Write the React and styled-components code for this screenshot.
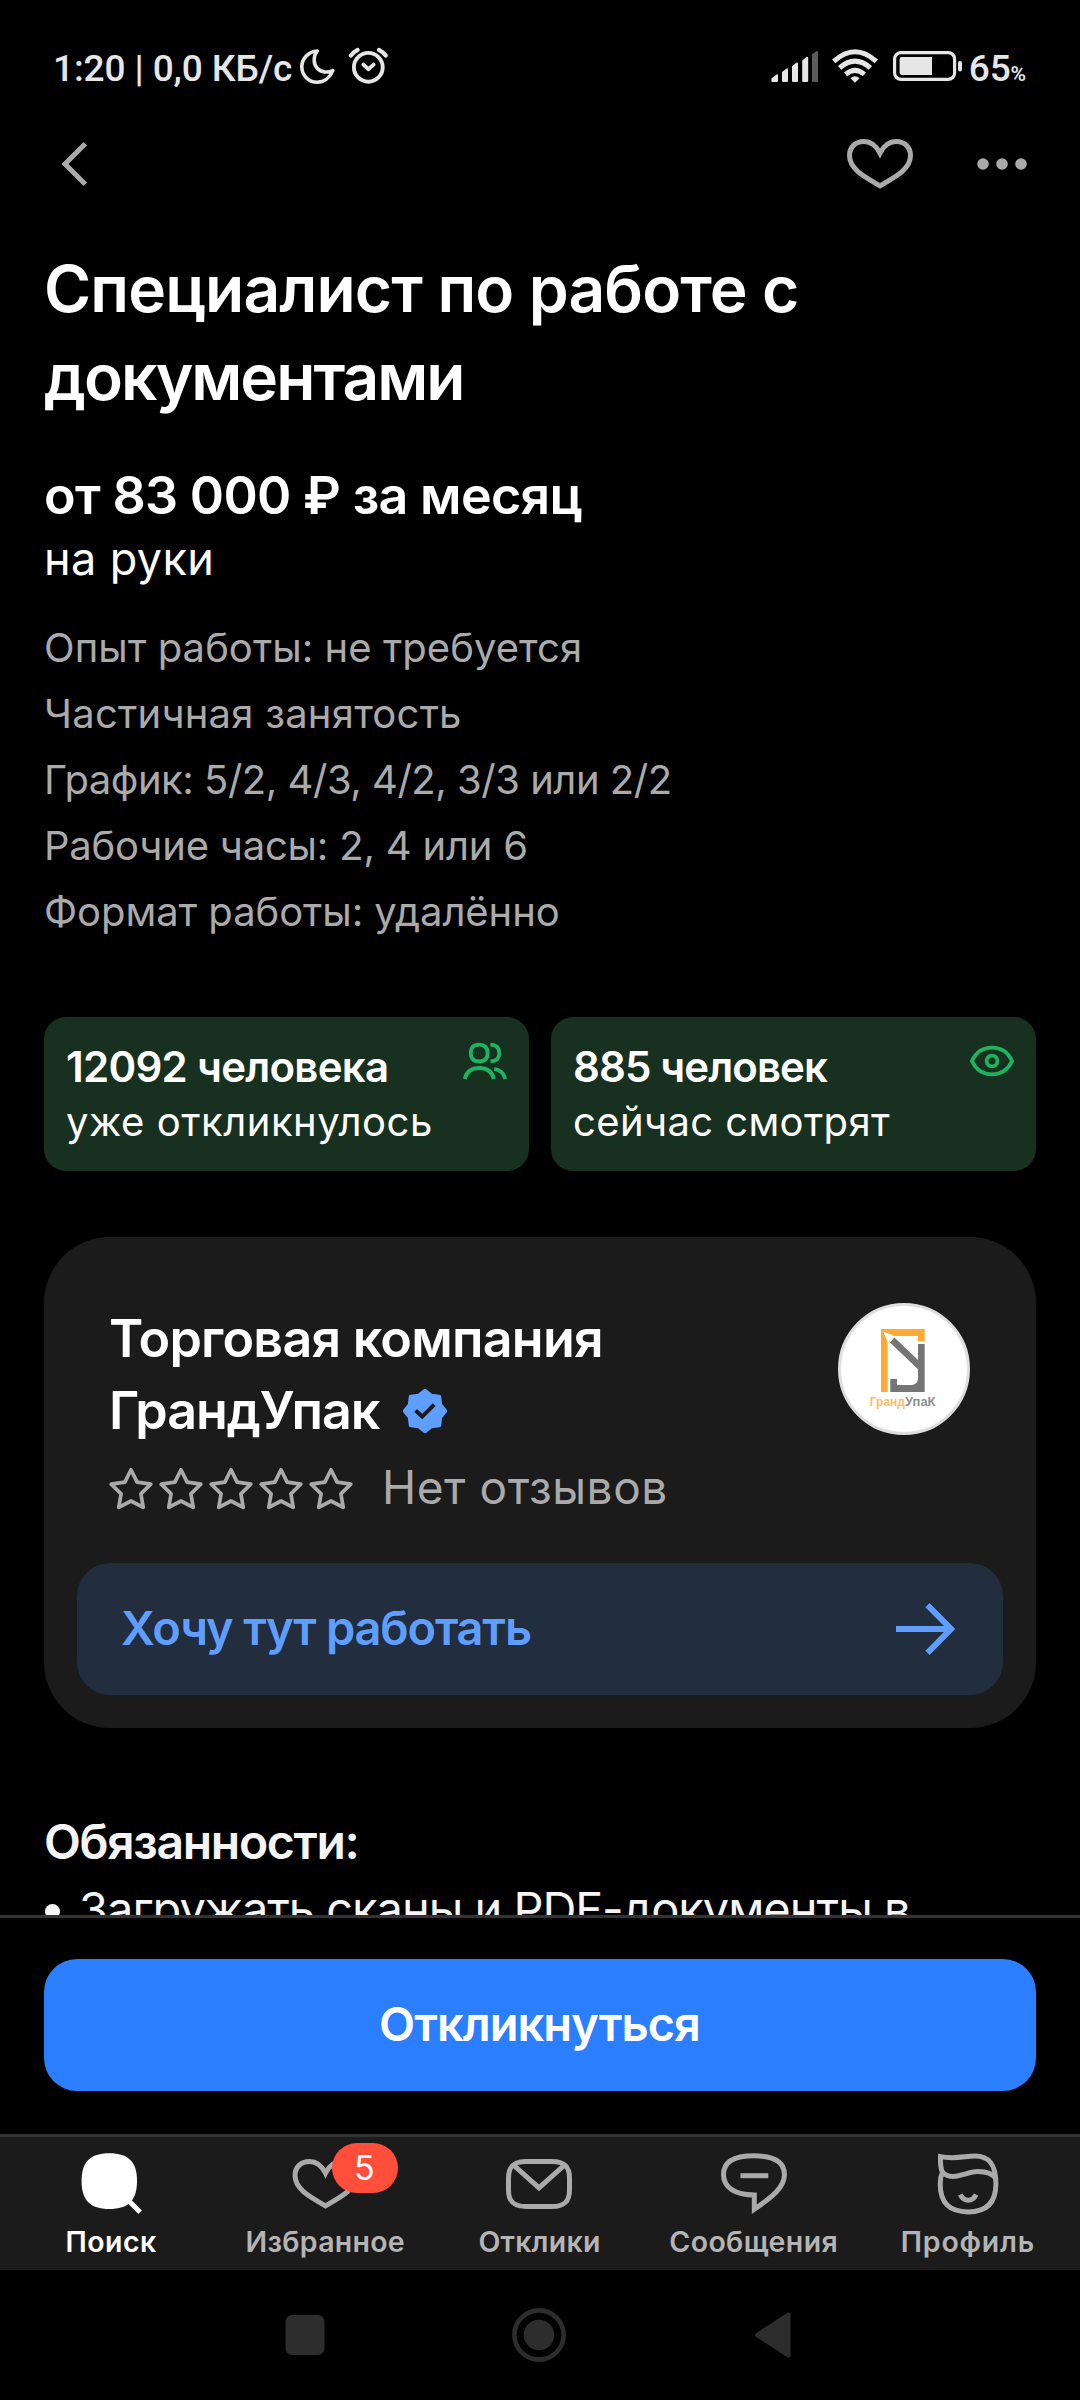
import React from 'react';
import styled, { createGlobalStyle } from 'styled-components';

const color = {
  bg: '#000000',
  surface: '#1b1b1b',
  line: '#333333',
  text: '#ffffff',
  muted: '#aaaaaa',
  status: '#e6e6e6',
  green: '#1db360',
  greenBg: '#18301f',
  blue: '#2b7fff',
  blueText: '#5e9eff',
  blueBg: '#222d3d',
  red: '#ff4f3a',
  system: '#2d2d2d',
};

const GlobalStyle = createGlobalStyle`
  * { box-sizing: border-box; }
  body {
    margin: 0;
    background: ${color.bg};
    color: ${color.text};
    font-family: Inter, "Noto Sans", sans-serif;
  }
  svg { display: block; flex: none; }
`;

const Screen = styled.div`
  display: flex;
  flex-direction: column;
  width: 1080px;
  height: 2400px;
  overflow: hidden;
  background: ${color.bg};
`;

/* Status bar */

const StatusBar = styled.div`
  display: flex;
  align-items: center;
  justify-content: space-between;
  flex: none;
  height: 100px;
  padding: 32px 54px 0 53px;
  color: ${color.status};
`;

const StatusGroup = styled.div`
  display: flex;
  align-items: center;
  gap: ${(p) => p.$gap}px;
`;

const StatusText = styled.span`
  margin: 5px ${(p) => p.$right || 0}px 0 ${(p) => p.$left || 0}px;
  font: 500 37px/44px Roboto, sans-serif;
  letter-spacing: -0.11px;
  white-space: pre;
`;

const Percent = styled.small`
  font-size: 21px;
  font-weight: 600;
  line-height: 0;
`;

/* Top bar */

const TopBar = styled.header`
  display: flex;
  align-items: center;
  justify-content: space-between;
  flex: none;
  height: 128px;
  padding: 0 53px 0 60px;
  color: ${color.muted};
`;

const TopActions = styled.div`
  display: flex;
  align-items: center;
  gap: 64px;
`;

/* Vacancy */

const Content = styled.main`
  display: flex;
  flex-direction: column;
  flex: 1;
  min-height: 0;
  overflow: hidden;
  padding: 17px 44px 0;
`;

const Line = styled.span`
  display: flex;
  align-items: center;
  white-space: pre;
  letter-spacing: ${(p) => p.$track || 0}px;
`;

const Title = styled.h1`
  flex: none;
  margin: 0;
  font-size: 64px;
  font-weight: 600;
  line-height: 88px;
`;

const Salary = styled.div`
  flex: none;
  margin-top: 43px;
  font-size: 52px;
  font-weight: 600;
  line-height: 64px;
`;

const Net = styled.div`
  flex: none;
  margin-top: 1px;
  font-size: 45px;
  line-height: 60px;
`;

const Details = styled.div`
  flex: none;
  margin-top: 26px;
  color: ${color.muted};
  font-size: 40px;
  line-height: 66px;
`;

const Stats = styled.div`
  display: grid;
  grid-template-columns: 1fr 1fr;
  gap: 22px;
  flex: none;
  margin-top: 72px;
`;

const StatCard = styled.div`
  display: flex;
  justify-content: space-between;
  height: 154px;
  padding: 22px 22px 20px;
  border-radius: 22px;
  background: ${color.greenBg};
`;

const StatValue = styled.div`
  font-size: 42px;
  font-weight: 600;
  line-height: 55px;
`;

const StatLabel = styled.div`
  width: 0;
  font-size: 40px;
  line-height: 55px;
`;

/* Company */

const CompanyCard = styled.section`
  display: flex;
  flex-direction: column;
  flex: none;
  height: 491px;
  margin-top: 66px;
  padding: 66px 33px 33px;
  border-radius: 66px;
  background: ${color.surface};
`;

const CompanyHead = styled.div`
  display: flex;
  align-items: flex-start;
  justify-content: space-between;
  padding: 0 33px 0 32px;
`;

const CompanyName = styled.h2`
  margin: 0;
  font-size: 52px;
  font-weight: 600;
  line-height: 72px;
`;

const Verified = styled.svg`
  margin-left: 24px;
`;

const Rating = styled.div`
  display: flex;
  align-items: center;
  height: 66px;
  margin-top: 9px;
  color: ${color.muted};
`;

const Stars = styled.div`
  display: flex;
  gap: 6px;
`;

const RatingText = styled.span`
  margin: -4px 0 0 29px;
  font-size: 46px;
  line-height: 60px;
  letter-spacing: 0.55px;
`;

const WishButton = styled.button`
  display: flex;
  align-items: center;
  justify-content: space-between;
  height: 132px;
  margin-top: auto;
  padding: 0 48px 0 44px;
  border: 0;
  border-radius: 33px;
  background: ${color.blueBg};
  color: ${color.blueText};
  font: 600 47px/60px Inter, sans-serif;
  letter-spacing: -1.2px;
`;

const WishLabel = styled.span`
  padding-bottom: 2px;
`;

/* Description */

const SectionTitle = styled.h3`
  flex: none;
  margin: 81px 0 1px;
  color: #f5f5f5;
  font-size: 48px;
  font-weight: 600;
  line-height: 66px;
  letter-spacing: -1.31px;
`;

const List = styled.ul`
  flex: none;
  margin: 0;
  padding: 0;
  list-style: none;
`;

const ListItem = styled.li`
  display: flex;
  align-items: center;
  color: #f5f5f5;
  font-size: 47px;
  line-height: 66px;
  letter-spacing: -1.02px;
  white-space: nowrap;

  &::before {
    content: '';
    width: 15px;
    height: 15px;
    margin: 4px 19px 0 1px;
    border-radius: 50%;
    background: currentColor;
  }
`;

/* Bottom */

const ActionBar = styled.div`
  flex: none;
  height: 219px;
  padding: 41px 44px 0;
  border-top: 3px solid ${color.line};
`;

const ApplyButton = styled.button`
  width: 100%;
  height: 132px;
  padding: 0 1px 2px 0;
  border: 0;
  border-radius: 33px;
  background: ${color.blue};
  color: ${color.text};
  font: 600 47px/60px Inter, sans-serif;
  letter-spacing: -0.96px;
`;

const TabBar = styled.nav`
  display: grid;
  grid-template-columns: repeat(5, 1fr);
  flex: none;
  height: 136px;
  padding: 14px 5px 0 4px;
  border-top: 3px solid ${color.line};
  background: ${color.surface};
`;

const Tab = styled.div`
  display: flex;
  flex-direction: column;
  align-items: center;
  gap: 7px;
  color: ${(p) => (p.$active ? color.text : color.muted)};
`;

const TabIcon = styled.div`
  position: relative;
  width: 66px;
  height: 66px;
`;

const TabLabel = styled.span`
  color: ${(p) => (p.$active ? color.text : '#b4b4b4')};
  font-size: 28.5px;
  font-weight: 600;
  line-height: 36px;
  letter-spacing: ${(p) => p.$track}px;
`;

const Badge = styled.span`
  position: absolute;
  top: -8px;
  left: 40px;
  width: 66px;
  height: 50px;
  padding-right: 2px;
  border-radius: 25px;
  background: ${color.red};
  color: ${color.text};
  font-size: 34px;
  line-height: 50px;
  text-align: center;
`;

const SystemBar = styled.div`
  display: flex;
  align-items: center;
  flex: none;
  height: 130px;
  padding-left: 285px;
  gap: 187px;
  color: ${color.system};
`;

/* Icons */

const Outline = ({ w = 66, h = 66, sw = 5, children, ...rest }) => (
  <svg width={w} height={h} viewBox={`0 0 ${w} ${h}`} fill="none" stroke="currentColor" strokeWidth={sw} {...rest}>
    {children}
  </svg>
);

const MoonIcon = () => (
  <Outline w={36} h={36} sw={3.6} strokeLinejoin="round">
    <path d="M18.2 3C9 3.5 2.8 11 2.8 18.8C2.8 27.5 9.5 34.2 18 34.2C25 34.2 31 29.5 33.8 22.6C29 25 22.4 24.6 18.2 20.2C14 15.6 14.4 8 18.2 3Z" />
  </Outline>
);

const AlarmIcon = () => (
  <Outline w={40} h={40} sw={3.9} strokeLinecap="round" strokeLinejoin="round">
    <circle cx="20.3" cy="21.3" r="14.4" />
    <path d="M2.9 9.6Q5.6 6 9.6 3.9M37.7 9.6Q35 6 31 3.9" strokeWidth="4.2" />
    <path d="M15.4 18.6L20.3 23.2L25.6 18.6" />
  </Outline>
);

const SignalIcon = () => (
  <svg width="47" height="34" viewBox="0 0 47 34" fill="currentColor">
    <path d="M.4 29.5L6 25.2Q7 25 7 26V32Q7 33 6 33H1.4Q.4 33 .4 32Z" />
    <path d="M11 23L15.6 19.4Q17 19.2 17 20.4V32Q17 33 16 33H12Q11 33 11 32Z" />
    <path d="M21 17.2L25.6 13.6Q27 13.4 27 14.6V32Q27 33 26 33H22Q21 33 21 32Z" />
    <path d="M31.2 11.4L35.8 7.8Q37.2 7.6 37.2 8.8V32Q37.2 33 36.2 33H32.2Q31.2 33 31.2 32Z" />
    <path d="M41 5.6L45.6 2Q47 1.8 47 3V32Q47 33 46 33H42Q41 33 41 32Z" fill="#5c5c5c" />
  </svg>
);

const WifiIcon = () => (
  <Outline w={47} h={34} sw={4.9}>
    <path d="M1.7 12.4Q23-7 44.3 12.4" />
    <path d="M7.6 18.9Q23 5.4 38.4 18.9" />
    <path d="M13.6 25.4Q23 17.4 32.4 25.4" />
    <path d="M18.4 29.2Q23 25.2 27.6 29.2L23 33.8Z" fill="currentColor" stroke="none" />
  </Outline>
);

const BatteryIcon = () => (
  <svg width="70" height="30" viewBox="0 0 70 30" fill="none">
    <rect x="1.6" y="1.6" width="60" height="26.8" rx="6.5" stroke="currentColor" strokeWidth="3.2" />
    <path d="M39 6V24H9Q6.6 24 6.6 21.6V8.4Q6.6 6 9 6Z" fill="currentColor" />
    <rect x="65" y="10" width="4" height="10.4" rx="1.8" fill="currentColor" />
  </svg>
);

const BackIcon = () => (
  <Outline w={28} h={46}>
    <path d="M25.3 2.8L5 23L25.3 43.2" />
  </Outline>
);

const HEART =
  'M33 14.2C29.4 7 24 2.5 17 2.5C8.4 2.5 2.5 8 2.5 16.6C2.5 30.4 18 38.2 33 46.8C48 38.2 63.5 30.4 63.5 16.6C63.5 8 57.6 2.5 49 2.5C42 2.5 36.6 7 33 14.2Z';

const HeartIcon = () => (
  <Outline w={66} h={50}>
    <path d={HEART} />
  </Outline>
);

const MoreIcon = () => (
  <svg width="50" height="12" viewBox="0 0 50 12" fill="currentColor">
    <circle cx="6" cy="6" r="5.8" />
    <circle cx="25" cy="6" r="5.8" />
    <circle cx="44" cy="6" r="5.8" />
  </svg>
);

const PeopleIcon = () => (
  <Outline w={44} h={44} sw={3.8} color={color.green}>
    <path d="M16.2 5.6C22 5.6 24.6 8.4 24.6 14C24.6 19.6 22 22.4 16.2 22.4C10.4 22.4 7.8 19.6 7.8 14C7.8 8.4 10.4 5.6 16.2 5.6Z" />
    <path d="M27.4 5.6C33.4 5.8 36.3 8.6 36.3 14C36.3 19.4 33.4 22.2 27.4 22.4" />
    <path d="M1.7 40C3.4 32.8 8.8 29 16.3 29C23.8 29 29.2 32.8 30.9 40" />
    <path d="M31.2 29.8C37.2 30.8 40.8 34.2 42.3 40" />
  </Outline>
);

const EyeIcon = () => (
  <Outline w={44} h={44} sw={3.8} color={color.green}>
    <path d="M1.9 22C6.2 12.8 12.8 8.7 22 8.7C31.2 8.7 37.8 12.8 42.1 22C37.8 31.2 31.2 35.3 22 35.3C12.8 35.3 6.2 31.2 1.9 22Z" />
    <circle cx="22" cy="22" r="5.4" />
  </Outline>
);

const burst = (points, outer, inner) =>
  Array.from({ length: points * 2 }, (_, i) => {
    const r = i % 2 ? inner : outer;
    const a = (Math.PI * i) / points - Math.PI / 2;
    return `${(22 + r * Math.cos(a)).toFixed(2)},${(22 + r * Math.sin(a)).toFixed(2)}`;
  }).join(' ');

const VerifiedIcon = () => (
  <Verified width="44" height="44" viewBox="0 0 44 44">
    <polygon points={burst(8, 20.2, 16.4)} fill={color.blueText} stroke={color.blueText} strokeWidth="4" strokeLinejoin="round" />
    <path d="M12.6 21.6L19.2 27.6L31.2 15.6" fill="none" stroke={color.surface} strokeWidth="4" />
  </Verified>
);

const StarIcon = () => (
  <Outline w={44} h={44} sw={3.7} strokeLinejoin="round">
    <polygon points={burst(5, 20.8, 10.4)} transform="translate(0 1.6)" />
  </Outline>
);

const ArrowIcon = () => (
  <Outline w={59} h={52} sw={6}>
    <path d="M0 26H55M31.5 2.2L55 26L31.5 49.8" />
  </Outline>
);

const CompanyLogo = () => (
  <svg width="132" height="132" viewBox="0 0 132 132">
    <circle cx="66" cy="66" r="64.5" fill="#fff" stroke="#dedede" strokeWidth="3" />
    <path d="M43 26H86.7V38.5H80V33H57L49.7 40V89H43Z" fill="#fbaa36" />
    <path d="M45.3 28.6L57.6 33.4L53.6 36L50 40.6Z" fill="#fff" />
    <path d="M56.4 34.4L80 57V41H86.7V89H52.3V76H59V82H74Q80 81 80 75V66.3L52 39.6Z" fill="#757575" />
    <text y="103" fontFamily="Liberation Sans" fontSize="12" fontWeight="700">
      <tspan x="31.8" textLength="35" lengthAdjust="spacingAndGlyphs" fill="#f9bd6b">Гранд</tspan>
      <tspan x="67" textLength="30.5" lengthAdjust="spacingAndGlyphs" fill="#8f8f8f">УпаК</tspan>
    </text>
  </svg>
);

const SearchIcon = () => (
  <Outline>
    <path d="M31.3 2.3C50.5 2.3 59 11 59 30C59 49.3 50.5 58 31.3 58C12.1 58 3.6 49.3 3.6 30C3.6 11 12.1 2.3 31.3 2.3Z" fill="currentColor" stroke="none" />
    <path d="M46 45L62.2 61.2" />
  </Outline>
);

const FavouriteIcon = () => (
  <Outline>
    <path d={HEART} transform="translate(.5 8)" />
  </Outline>
);

const MailIcon = () => (
  <Outline>
    <path d="M20 10.5H46C58 10.5 63.5 15 63.5 27V39C63.5 51 58 55.5 46 55.5H20C8 55.5 2.5 51 2.5 39V27C2.5 15 8 10.5 20 10.5Z" />
    <path d="M7 13.6L33 36.8L59 13.6" />
  </Outline>
);

const ChatIcon = () => (
  <Outline>
    <path d="M33.3 44C14 44 2.5 36.6 2.5 23.6C2.5 10.4 13.4 4.8 33 4.8C52.6 4.8 63.5 10.4 63.5 23.6C63.5 36.8 51 46 33.3 58.2Z" />
    <path d="M19.4 24.7H47.3" />
  </Outline>
);

const ProfileIcon = () => (
  <Outline>
    <path d="M5.5 5.6C20 8.6 30 5 40 5C54 5 60.9 13 60.9 33C60.9 52 51.5 60.9 33.1 60.9C14.5 60.9 5.2 52 5.2 33C5.2 28.6 5.8 24.6 7.4 21.2C5.2 16.5 5.3 11 5.5 5.6Z" />
    <path d="M7.4 21.2C16 31 32 20.6 42.5 20.6C51 20.6 58 22.4 61 28.4" />
    <path d="M25.2 43.6Q28.2 49.2 33.2 49.2Q38.2 49.2 41.2 43.6" />
  </Outline>
);

const RecentsIcon = () => (
  <svg width="40" height="40" viewBox="0 0 40 40">
    <rect x=".5" y="0" width="39" height="40" rx="6.5" fill="currentColor" />
  </svg>
);

const HomeIcon = () => (
  <Outline w={54} h={54} sw={4.6}>
    <circle cx="27" cy="27" r="24.6" />
    <circle cx="27" cy="27" r="15.3" fill="currentColor" stroke="none" />
  </Outline>
);

const SystemBackIcon = () => (
  <svg width="40" height="46" viewBox="0 0 40 46">
    <path d="M4 23L35.5 2.5V43.5Z" fill="currentColor" stroke="currentColor" strokeWidth="4" strokeLinejoin="round" />
  </svg>
);

/* Data */

const details = [
  ['Опыт работы: не требуется', 0.05],
  ['Частичная занятость', 0.23],
  ['График: 5/2, 4/3, 4/2, 3/3 или 2/2', -0.48],
  ['Рабочие часы: 2, 4 или 6', -0.2],
  ['Формат работы: удалённо', -0.06],
];

const stats = [
  { value: '12092 человека', valueTrack: -0.72, label: 'уже откликнулось', labelTrack: 0.53, Icon: PeopleIcon },
  { value: '885 человек', valueTrack: -0.89, label: 'сейчас смотрят', labelTrack: 0.38, Icon: EyeIcon },
];

const tabs = [
  { label: 'Поиск', track: 0.51, Icon: SearchIcon, active: true },
  { label: 'Избранное', track: 0.27, Icon: FavouriteIcon, badge: 5 },
  { label: 'Отклики', track: 0.23, Icon: MailIcon },
  { label: 'Сообщения', track: 0.37, Icon: ChatIcon },
  { label: 'Профиль', track: 0.75, Icon: ProfileIcon },
];

export default function App() {
  return (
    <Screen>
      <GlobalStyle />

      <StatusBar>
        <StatusGroup $gap={13}>
          <StatusText $right={-6}>1:20 | 0,0 КБ/с</StatusText>
          <MoonIcon />
          <AlarmIcon />
        </StatusGroup>
        <StatusGroup $gap={14}>
          <SignalIcon />
          <WifiIcon />
          <BatteryIcon />
          <StatusText $left={-8}>65<Percent>%</Percent></StatusText>
        </StatusGroup>
      </StatusBar>

      <TopBar>
        <BackIcon />
        <TopActions>
          <HeartIcon />
          <MoreIcon />
        </TopActions>
      </TopBar>

      <Content>
        <Title>
          <Line $track={-0.84}>Специалист по работе с</Line>
          <Line $track={-2}>документами</Line>
        </Title>
        <Salary>
          <Line $track={-0.69}>от 83 000 ₽ за месяц</Line>
        </Salary>
        <Net>
          <Line $track={0.4}>на руки</Line>
        </Net>
        <Details>
          {details.map(([text, track]) => (
            <Line key={text} $track={track}>{text}</Line>
          ))}
        </Details>

        <Stats>
          {stats.map(({ value, valueTrack, label, labelTrack, Icon }) => (
            <StatCard key={value}>
              <div>
                <StatValue><Line $track={valueTrack}>{value}</Line></StatValue>
                <StatLabel><Line $track={labelTrack}>{label}</Line></StatLabel>
              </div>
              <Icon />
            </StatCard>
          ))}
        </Stats>

        <CompanyCard>
          <CompanyHead>
            <div>
              <CompanyName>
                <Line $track={-0.76}>Торговая компания</Line>
                <Line $track={-1.05}>ГрандУпак<VerifiedIcon /></Line>
              </CompanyName>
              <Rating>
                <Stars>
                  {[1, 2, 3, 4, 5].map((n) => <StarIcon key={n} />)}
                </Stars>
                <RatingText>Нет отзывов</RatingText>
              </Rating>
            </div>
            <CompanyLogo />
          </CompanyHead>
          <WishButton>
            <WishLabel>Хочу тут работать</WishLabel>
            <ArrowIcon />
          </WishButton>
        </CompanyCard>

        <SectionTitle>Обязанности:</SectionTitle>
        <List>
          <ListItem>Загружать сканы и PDF-документы в</ListItem>
        </List>
      </Content>

      <ActionBar>
        <ApplyButton>Откликнуться</ApplyButton>
      </ActionBar>

      <TabBar>
        {tabs.map(({ label, track, Icon, active, badge }) => (
          <Tab key={label} $active={active}>
            <TabIcon>
              <Icon />
              {badge && <Badge>{badge}</Badge>}
            </TabIcon>
            <TabLabel $active={active} $track={track}>{label}</TabLabel>
          </Tab>
        ))}
      </TabBar>

      <SystemBar>
        <RecentsIcon />
        <HomeIcon />
        <SystemBackIcon />
      </SystemBar>
    </Screen>
  );
}
